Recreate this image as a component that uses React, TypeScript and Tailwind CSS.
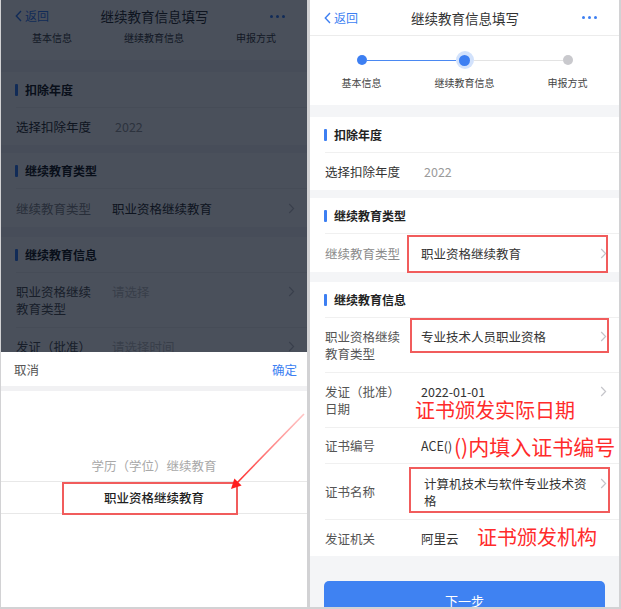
import React from "react";

const BLUE = "#3d7ff2";

function Chevron({ className = "" }: { className?: string }) {
  return (
    <svg width="7" height="11" viewBox="0 0 7 11" className={"shrink-0 " + className}>
      <polyline points="1.2,1 5.6,5.5 1.2,10" fill="none" stroke="#c5c5ca" strokeWidth="1.2" />
    </svg>
  );
}

function Nav({ compact }: { compact?: boolean }) {
  return (
    <div
      className={
        "relative z-10 bg-white flex items-center justify-between pl-[14px] pr-[13px] " +
        (compact ? "h-[32px]" : "h-[36px] border-b border-[#ececec]")
      }
    >
      <div className="w-[64px] flex items-center text-[#3d7ff2] text-[12px] leading-[16px]">
        <svg width="7" height="12" viewBox="0 0 7 12">
          <polyline points="6,1 1.3,6 6,11" fill="none" stroke={BLUE} strokeWidth="1.4" />
        </svg>
        <span className="ml-[3px]">返回</span>
      </div>
      <div className="text-[13.5px] text-[#333] leading-[18px]">继续教育信息填写</div>
      <div className="w-[64px] flex justify-end gap-[3px] pr-[9px]">
        <div className="w-[3px] h-[3px] rounded-full bg-[#3d7ff2]" />
        <div className="w-[3px] h-[3px] rounded-full bg-[#3d7ff2]" />
        <div className="w-[3px] h-[3px] rounded-full bg-[#3d7ff2]" />
      </div>
    </div>
  );
}

function Step({
  label,
  leftLine,
  rightLine,
  dot,
}: {
  label: string;
  leftLine: string;
  rightLine: string;
  dot: React.ReactNode;
}) {
  return (
    <div className="flex flex-col items-center">
      <div className="w-full h-[20px] flex items-center">
        <div className={"flex-1 h-px " + leftLine} />
        {dot}
        <div className={"flex-1 h-px " + rightLine} />
      </div>
      <div className="mt-[6px] text-[10px] leading-[14px] text-[#444]">{label}</div>
    </div>
  );
}

function Steps() {
  return (
    <div className="bg-white h-[69px] grid grid-cols-3 pt-[14px]">
      <Step
        label="基本信息"
        leftLine="bg-transparent"
        rightLine="bg-[#4a88f2]"
        dot={<div className="w-[10px] h-[10px] rounded-full bg-[#3d7ff2]" />}
      />
      <Step
        label="继续教育信息"
        leftLine="bg-[#4a88f2]"
        rightLine="bg-[#e3e3e3]"
        dot={
          <div className="w-[18px] h-[18px] rounded-full bg-[#d2e2fc] flex items-center justify-center">
            <div className="w-[11px] h-[11px] rounded-full bg-[#3d7ff2]" />
          </div>
        }
      />
      <Step
        label="申报方式"
        leftLine="bg-[#e3e3e3]"
        rightLine="bg-transparent"
        dot={<div className="w-[10px] h-[10px] rounded-full bg-[#c9c9cd]" />}
      />
    </div>
  );
}

function SectionHeader({ title }: { title: string }) {
  return (
    <div className="h-[35px] flex items-center pl-[14px] bg-white">
      <div className="w-[3px] h-[12px] bg-[#3d7ff2] rounded-[1px] mr-[7px]" />
      <span className="text-[12px] font-bold text-[#222]">{title}</span>
    </div>
  );
}

function FormBody({ left }: { left?: boolean }) {
  return (
    <div className="flex flex-col">
      <Steps />

      <div className="mt-[12px] bg-white">
        <SectionHeader title="扣除年度" />
        <div className="ml-[15px] border-t border-[#f0f0f0] h-[38px] flex items-center">
          <span className="w-[96px] text-[#333]">选择扣除年度</span>
          <span className="pl-[3px] text-[#9a9a9a]">2022</span>
        </div>
      </div>

      <div className="mt-[8px] bg-white">
        <SectionHeader title="继续教育类型" />
        <div className="relative ml-[15px] border-t border-[#f0f0f0] h-[39px] flex items-center pr-[12px]">
          <span className="w-[96px] text-[#8a8a8a]">继续教育类型</span>
          <span className="flex-1 text-[#333]">职业资格继续教育</span>
          <Chevron />
          {!left && (
            <div className="absolute left-[82px] top-[1px] w-[201px] h-[38px] border-2 border-[#f15c5c]" />
          )}
        </div>
      </div>

      <div className="mt-[10px] bg-white">
        <SectionHeader title="继续教育信息" />
        {/* row 1 */}
        <div className="relative ml-[15px] border-t border-[#f0f0f0] h-[55px] flex items-start pt-[10px] pr-[12px]">
          <span className="w-[96px] text-[#555]">
            职业资格继续
            <br />
            教育类型
          </span>
          {left ? (
            <span className="flex-1 text-[#c2c2c2]">请选择</span>
          ) : (
            <span className="flex-1 text-[#333]">专业技术人员职业资格</span>
          )}
          <Chevron className="mt-[3px]" />
          {!left && (
            <div className="absolute left-[85px] top-0 w-[199px] h-[35px] border-2 border-[#f15c5c]" />
          )}
        </div>
        {/* row 2 */}
        <div className="relative ml-[15px] border-t border-[#f0f0f0] h-[55px] flex items-start pt-[10px] pr-[12px]">
          <span className="w-[96px] text-[#555]">
            发证（批准）
            <br />
            日期
          </span>
          {left ? (
            <span className="flex-1 text-[#c2c2c2]">请选择时间</span>
          ) : (
            <span className="flex-1 text-[#333]">2022-01-01</span>
          )}
          <Chevron className="mt-[3px]" />
          {!left && (
            <div className="absolute left-[90px] top-[25px] whitespace-nowrap text-[20px] leading-[24px] text-[#ff2b2b]">
              证书颁发实际日期
            </div>
          )}
        </div>
        {/* row 3 */}
        <div className="relative ml-[15px] border-t border-[#f0f0f0] h-[36px] flex items-center pr-[12px]">
          <span className="w-[96px] text-[#555]">证书编号</span>
          <span className="flex-1 text-[#333]">{left ? "" : "ACE()"}</span>
          {!left && (
            <div className="absolute left-[129px] top-[4px] whitespace-nowrap text-[21px] leading-[28px] text-[#ff2b2b]">
              ()内填入证书编号
            </div>
          )}
        </div>
        {/* row 4 */}
        <div className="relative ml-[15px] border-t border-[#f0f0f0] h-[56px] flex items-center pr-[12px]">
          <span className="w-[96px] text-[#555]">证书名称</span>
          <div className="flex-1 flex items-start">
            <div className="flex-1 pl-[3px] text-[#333] flex flex-col">
              <span className="whitespace-nowrap">计算机技术与软件专业技术资</span>
              <span>格</span>
            </div>
            <Chevron className="mt-[3px]" />
          </div>
          {!left && (
            <div className="absolute left-[84px] top-[3px] w-[201px] h-[46px] border-2 border-[#f15c5c]" />
          )}
        </div>
        {/* row 5 */}
        <div className="relative ml-[15px] border-t border-[#f0f0f0] h-[37px] flex items-center pr-[12px]">
          <span className="w-[96px] text-[#555]">发证机关</span>
          <span className="flex-1 text-[#333]">阿里云</span>
          {!left && (
            <div className="absolute left-[152px] top-[5px] whitespace-nowrap text-[20px] leading-[24px] text-[#ff2b2b]">
              证书颁发机构
            </div>
          )}
        </div>
      </div>

      <div className="mt-[25px] mx-[14px] h-[38px] rounded-[5px] bg-[#3f82f2] flex items-center justify-center text-white text-[13px]">
        下一步
      </div>
    </div>
  );
}

function LeftPanel() {
  return (
    <div className="relative w-[306px] h-full overflow-hidden bg-[#f4f5f7] text-[12.5px] leading-[17px]">
      <Nav compact />
      <div className="-mt-[41px]">
        <FormBody left />
      </div>
      <div className="absolute inset-0 z-20 bg-[rgba(0,9,24,0.71)]" />
      <div className="absolute z-30 left-0 right-0 bottom-0 h-[255px] bg-white flex flex-col">
        <div className="h-[34px] flex items-center justify-between pl-[13px] pr-[10px]">
          <span className="text-[#555]">取消</span>
          <span className="text-[#3d7ff2]">确定</span>
        </div>
        <div className="h-[5px] bg-[#f1f1f3]" />
        <div className="pt-[59px] flex flex-col">
          <div className="h-[31px] flex items-center justify-center text-[#a8a8a8]">
            学历（学位）继续教育
          </div>
          <div className="relative h-[33px] border-y border-[#e8e8e8] flex items-center justify-center text-[#1f1f1f] font-medium">
            职业资格继续教育
            <div className="absolute left-[61px] top-0 w-[176px] h-[33px] border-2 border-[#f15c5c]" />
          </div>
        </div>
      </div>
    </div>
  );
}

function RightPanel() {
  return (
    <div className="relative w-[309px] h-full overflow-hidden bg-[#f4f5f7] text-[12.5px] leading-[17px]">
      <Nav />
      <FormBody />
    </div>
  );
}

export default function App() {
  return (
    <div className="relative w-[621px] h-[609px] bg-[#d2d2d4] flex pl-[1px] pr-[2px] pb-[2px] gap-[3px] overflow-hidden font-['Noto_Sans_CJK_SC',sans-serif]">
      <LeftPanel />
      <RightPanel />
      <svg className="absolute left-0 top-0 z-40 pointer-events-none" width="621" height="609" viewBox="0 0 621 609">
        <defs>
          <linearGradient id="arr" x1="304" y1="414" x2="233" y2="487" gradientUnits="userSpaceOnUse">
            <stop offset="0" stopColor="#ff8a8a" stopOpacity="0.5" />
            <stop offset="1" stopColor="#ff1f1f" stopOpacity="1" />
          </linearGradient>
        </defs>
        <line x1="304" y1="414" x2="236" y2="484" stroke="url(#arr)" strokeWidth="1.6" />
        <polygon points="231,489 241.6,485.4 234.4,478.4" fill="#ff1f1f" />
      </svg>
    </div>
  );
}
